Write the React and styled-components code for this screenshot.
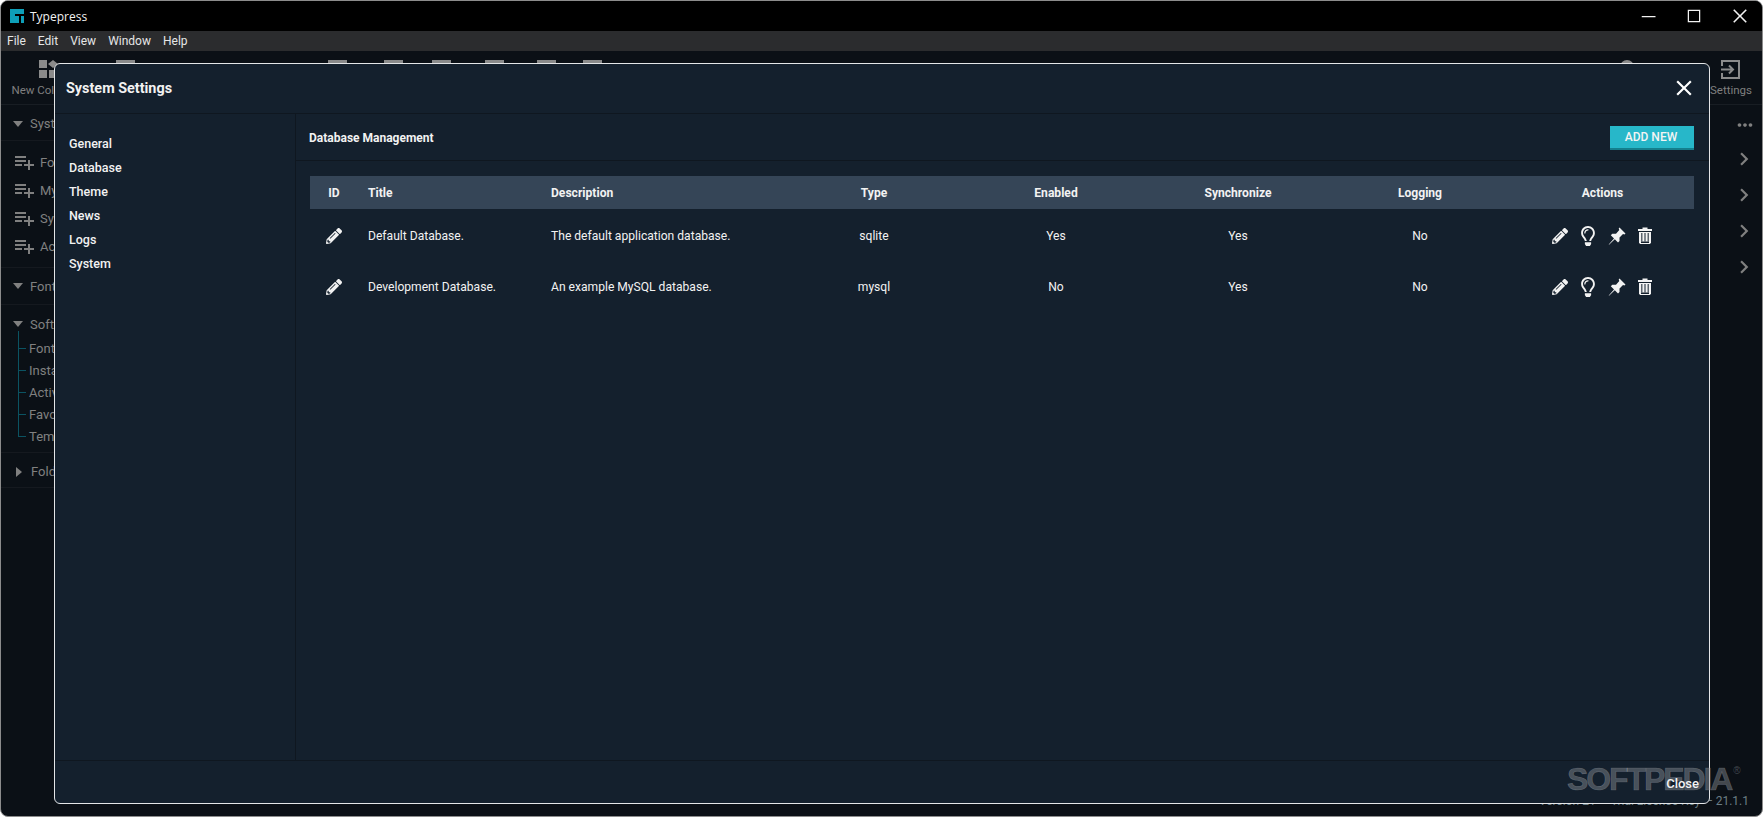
import React from "react";
import styled, { createGlobalStyle } from "styled-components";
import { FaPencilAlt, FaRegLightbulb } from "react-icons/fa";
import { MdPlaylistAdd, MdChevronRight, MdMoreHoriz, MdClose } from "react-icons/md";
import { VscChromeMinimize, VscChromeMaximize, VscChromeClose } from "react-icons/vsc";

const GlobalStyle = createGlobalStyle`
	html, body, #root {
		margin: 0;
		padding: 0;
		height: 100%;
		background: #fff;
		overflow: hidden;
	}
	* {
		box-sizing: border-box;
	}
	body {
		font-family: Roboto, "Liberation Sans", sans-serif;
	}
`;

const sidebarRows = ["Fonts", "My Fonts", "System", "Active"];
const treeRows = ["Fonts", "Installed", "Active", "Favorites", "Temporary"];
const navItems = ["General", "Database", "Theme", "News", "Logs", "System"];
const chevrons = [0, 1, 2, 3];
const toolSquares = [28, 193, 37, 29, 34, 33, 27];

const databases = [
	{ title: "Default Database.", description: "The default application database.", type: "sqlite", enabled: "Yes", sync: "Yes", logging: "No" },
	{ title: "Development Database.", description: "An example MySQL database.", type: "mysql", enabled: "No", sync: "Yes", logging: "No" },
];

const Logo = () => (
	<svg width="14" height="14" viewBox="0 0 14 14">
		<rect width="14" height="14" fill="#0e9fb8" />
		<path d="M5 5h9v2h-3v7H9V7H5z" fill="#000" />
	</svg>
);

const TrashIcon = () => (
	<svg width="14" height="17" viewBox="0 0 14 17">
		<path d="M4.500 2V.5h5V2H14v2H0V2z" fill="#f2f2f2" />
		<path d="M1 5h12v10.500l-1 1.500H2l-1-1.500z" fill="#f2f2f2" />
		<path d="M3 6h1.500v8.500H3zM6.250 6h1.500v8.500h-1.500zM9.500 6H11v8.500H9.500z" fill="#5b646d" />
		<path d="M3 14.500h8V16H3z" fill="#14202d" />
	</svg>
);

const PinIcon = () => (
	<svg width="18" height="18" viewBox="0 0 18 18" fill="#f2f2f2">
		<path d="M11.500.5l6 6-1 1L15 7l-3.500 3.500V14L10 15.500l-3.200-3.200L1 17.800l-.3-.3L6 11.500 2.800 8.200l1.500-1.500H8L11.300 3l-.6-1.500z" />
	</svg>
);

const App = () => {
	return (
		<Window>
			<GlobalStyle />
			<TitleBar>
				<Logo />
				<AppName>Typepress</AppName>
				<WindowButtons>
					<VscChromeMinimize />
					<VscChromeMaximize />
					<VscChromeClose />
				</WindowButtons>
			</TitleBar>
			<MenuBar>
				<span>File</span>
				<span>Edit</span>
				<span>View</span>
				<span>Window</span>
				<span>Help</span>
			</MenuBar>
			<Toolbar>
				<NewCollection>
					<svg width="20" height="20" viewBox="0 0 20 20" fill="#8b8b8b">
						<path d="M0 0h8v8H0zM0 10h8v8H0zM10 10h8v8h-8zM14 0l5 4-5 4-5-4z" />
					</svg>
					New Collection
				</NewCollection>
				{toolSquares.map((gap, i) => (
					<ToolSquare key={i} $gap={gap} />
				))}
				<ToolSpacer />
				<ToolCircle />
				<SettingsTool>
					<svg width="20" height="20" viewBox="0 0 20 20" fill="none" stroke="#8b8b8b" strokeWidth="2">
						<path d="M1 6V1h17v17H1v-5M0 9.500h12M8 5.500l4 4-4 4" />
					</svg>
					Settings
				</SettingsTool>
			</Toolbar>
			<Workspace>
				<Sidebar>
					<SideHeader $height={36} $top={2}>
						<ArrowDown />
						System
					</SideHeader>
					<SideList>
						{sidebarRows.map((row) => (
							<SideRow key={row}>
								<MdPlaylistAdd />
								{row}
							</SideRow>
						))}
					</SideList>
					<SideHeader $height={37}>
						<ArrowDown />
						Fonts
					</SideHeader>
					<SideHeader $height={38} $plain>
						<ArrowDown />
						Softpedia
					</SideHeader>
					<Tree>
						{treeRows.map((row) => (
							<TreeRow key={row}>{row}</TreeRow>
						))}
					</Tree>
					<SideHeader $height={35} $top={3}>
						<ArrowRight />
						Folders
					</SideHeader>
				</Sidebar>
				<RightPanel>
					<DotsRow>
						<MdMoreHoriz />
					</DotsRow>
					{chevrons.map((c) => (
						<ChevronRow key={c}>
							<MdChevronRight />
						</ChevronRow>
					))}
				</RightPanel>
			</Workspace>
			<Version>Version 21 — Trial License Key — 21.1.1</Version>

			<Modal>
				<ModalHeader>
					<ModalTitle>System Settings</ModalTitle>
					<CloseIcon />
				</ModalHeader>
				<ModalBody>
					<Nav>
						{navItems.map((item) => (
							<NavItem key={item}>{item}</NavItem>
						))}
					</Nav>
					<Content>
						<ContentHeader>
							<ContentTitle>Database Management</ContentTitle>
							<AddButton>ADD NEW</AddButton>
						</ContentHeader>
						<Table>
							<HeadRow>
								<Cell $center>ID</Cell>
								<Cell $pad>Title</Cell>
								<Cell $pad>Description</Cell>
								<Cell $center>Type</Cell>
								<Cell $center>Enabled</Cell>
								<Cell $center>Synchronize</Cell>
								<Cell $center>Logging</Cell>
								<Cell $center>Actions</Cell>
							</HeadRow>
							{databases.map((db) => (
								<BodyRow key={db.title}>
									<Cell $center>
										<FaPencilAlt />
									</Cell>
									<Cell $pad>{db.title}</Cell>
									<Cell $pad>{db.description}</Cell>
									<Cell $center>{db.type}</Cell>
									<Cell $center>{db.enabled}</Cell>
									<Cell $center>{db.sync}</Cell>
									<Cell $center>{db.logging}</Cell>
									<Actions>
										<ActionSlot>
											<FaPencilAlt />
										</ActionSlot>
										<ActionSlot $size={20}>
											<FaRegLightbulb />
										</ActionSlot>
										<ActionSlot>
											<PinIcon />
										</ActionSlot>
										<ActionSlot>
											<TrashIcon />
										</ActionSlot>
									</Actions>
								</BodyRow>
							))}
						</Table>
					</Content>
				</ModalBody>
				<ModalFooter>
					<CloseText>Close</CloseText>
				</ModalFooter>
			</Modal>
			<Watermark>SOFTPEDIA<sup>®</sup></Watermark>
		</Window>
	);
};

export default App;

const Window = styled.div`
	position: relative;
	width: 1763px;
	height: 817px;
	display: flex;
	flex-direction: column;
	background: #0b1016;
	border: 1px solid #8c8c8c;
	border-radius: 8px;
	overflow: hidden;
`;

const TitleBar = styled.div`
	height: 30px;
	flex: none;
	display: flex;
	align-items: center;
	padding-left: 9px;
	background: #000;
	color: #f2f2f2;
`;

const AppName = styled.div`
	margin-left: 6px;
	font-size: 12px;
	font-family: "Open Sans", sans-serif;
`;

const WindowButtons = styled.div`
	margin-left: auto;
	display: flex;
	align-items: center;
	gap: 26px;
	padding-right: 12px;
	font-size: 20px;
`;

const MenuBar = styled.div`
	height: 20px;
	flex: none;
	display: flex;
	align-items: center;
	gap: 12px;
	padding-left: 6px;
	background: #2b2c2e;
	color: #e6e6e6;
	font-size: 12px;
`;

const Toolbar = styled.div`
	height: 54px;
	flex: none;
	display: flex;
	align-items: flex-start;
	padding: 9px 0 0 11px;
	border-bottom: 1px solid #181d23;
	color: #7f7f7f;
	font-size: 11.5px;
`;

const NewCollection = styled.div`
	width: 76px;
	display: flex;
	flex-direction: column;
	align-items: center;
	gap: 3px;
	white-space: nowrap;

	svg {
		margin-right: 2px;
	}
`;

const ToolSquare = styled.div`
	flex: none;
	width: 19px;
	height: 20px;
	margin-left: ${(props) => props.$gap}px;
	background: #8b8b8b;
`;

const ToolSpacer = styled.div`
	flex: 1;
`;

const ToolCircle = styled.div`
	width: 14px;
	height: 14px;
	margin-right: 75px;
	border-radius: 50%;
	background: #8b8b8b;
`;

const SettingsTool = styled.div`
	width: 44px;
	margin-right: 9px;
	display: flex;
	flex-direction: column;
	align-items: center;
	gap: 3px;
`;

const Workspace = styled.div`
	flex: 1;
	display: flex;
	justify-content: space-between;
	color: #808080;
	font-size: 13px;
`;

const Sidebar = styled.div`
	width: 54px;
	white-space: nowrap;
	overflow: hidden;
`;

const SideHeader = styled.div`
	height: ${(props) => props.$height}px;
	display: flex;
	align-items: center;
	gap: 7px;
	padding: ${(props) => props.$top || 0}px 0 0 12px;
	border-bottom: ${(props) => (props.$plain ? "none" : "1px solid #15191f")};
`;

const ArrowDown = styled.span`
	flex: none;
	width: 0;
	height: 0;
	border-left: 5px solid transparent;
	border-right: 5px solid transparent;
	border-top: 6px solid #808080;
`;

const ArrowRight = styled.span`
	flex: none;
	width: 0;
	height: 0;
	margin: 0 2px 0 3px;
	border-top: 5px solid transparent;
	border-bottom: 5px solid transparent;
	border-left: 6px solid #808080;
`;

const SideList = styled.div`
	display: flex;
	flex-direction: column;
	padding: 7px 0;
	border-bottom: 1px solid #15191f;
`;

const SideRow = styled.div`
	height: 28px;
	display: flex;
	align-items: center;
	gap: 4px;
	padding-left: 11px;

	svg {
		font-size: 24px;
		flex: none;
	}
`;

const Tree = styled.div`
	margin-top: -6px;
	padding: 0 0 5px 17px;
	border-bottom: 1px solid #15191f;
`;

const TreeRow = styled.div`
	position: relative;
	height: 22px;
	display: flex;
	align-items: center;
	padding-left: 11px;

	&::before {
		content: "";
		position: absolute;
		left: 0;
		top: 11px;
		width: 8px;
		height: 1px;
		background: #0b5362;
	}

	&::after {
		content: "";
		position: absolute;
		left: 0;
		top: 0;
		bottom: 0;
		width: 1px;
		background: #0b5362;
	}

	&:first-child::after {
		top: -6px;
	}

	&:last-child::after {
		bottom: 10px;
	}
`;

const RightPanel = styled.div`
	width: 54px;
	display: flex;
	flex-direction: column;
	align-items: flex-end;
`;

const DotsRow = styled.div`
	height: 36px;
	padding: 3px 6px 0 0;
	display: flex;
	align-items: center;
	font-size: 22px;
`;

const ChevronRow = styled.div`
	height: 36px;
	padding-right: 5px;
	display: flex;
	align-items: center;
	font-size: 26px;
`;

const Version = styled.div`
	position: absolute;
	right: 13px;
	bottom: 8px;
	color: #6b7f86;
	font-size: 12px;
	white-space: nowrap;
`;

const Modal = styled.div`
	position: absolute;
	left: 53px;
	top: 62px;
	width: 1656px;
	height: 741px;
	display: flex;
	flex-direction: column;
	background: #14202d;
	border: 1px solid #e4e6e8;
	border-radius: 6px;
	color: #f2f2f2;
`;

const ModalHeader = styled.div`
	height: 50px;
	flex: none;
	display: flex;
	align-items: center;
	justify-content: space-between;
	padding: 0 12px 1px 11px;
	border-bottom: 1px solid #0f1720;
`;

const ModalTitle = styled.div`
	font-size: 14.4px;
	font-weight: 700;
`;

const CloseIcon = styled(MdClose)`
	font-size: 26px;
	color: #fff;
`;

const ModalBody = styled.div`
	flex: 1;
	display: flex;
	min-height: 0;
`;

const Nav = styled.div`
	width: 241px;
	flex: none;
	display: flex;
	flex-direction: column;
	padding: 18px 0 0 14px;
	border-right: 1px solid #0f1720;
`;

const NavItem = styled.div`
	height: 24px;
	line-height: 24px;
	font-size: 12.5px;
	font-weight: 500;
`;

const Content = styled.div`
	flex: 1;
	min-width: 0;
`;

const ContentHeader = styled.div`
	height: 47px;
	display: flex;
	align-items: center;
	justify-content: space-between;
	padding: 0 15px 0 13px;
	border-bottom: 1px solid #0f1720;
`;

const ContentTitle = styled.div`
	padding-top: 2px;
	font-size: 12px;
	font-weight: 700;
`;

const AddButton = styled.button`
	width: 84px;
	height: 24px;
	margin-top: 1px;
	padding: 0 2px 0 0;
	background: #27b7c9;
	border: none;
	border-bottom: 2px solid #147f8d;
	color: #f4f4f4;
	font-family: inherit;
	font-size: 12px;
	font-weight: 500;
`;

const Table = styled.div`
	margin: 15px 15px 0 14px;
	font-size: 12px;
`;

const HeadRow = styled.div`
	height: 33px;
	display: grid;
	grid-template-columns: 48px 183px 242px repeat(4, 182px) 181px;
	align-items: center;
	background: #354557;
	font-weight: 700;
`;

const BodyRow = styled.div`
	height: 51px;
	padding-top: 2px;
	display: grid;
	grid-template-columns: 48px 183px 242px repeat(4, 182px) 181px;
	align-items: center;
`;

const Cell = styled.div`
	display: flex;
	align-items: center;
	justify-content: ${(props) => (props.$center ? "center" : "flex-start")};
	padding-left: ${(props) => (props.$pad ? "10px" : "0")};
	font-size: 12.1px;

	&:last-child {
		padding-left: 2px;
	}

	svg {
		font-size: 16px;
	}
`;

const Actions = styled.div`
	display: flex;
	align-items: center;
	justify-content: center;
	padding-left: 2px;
`;

const ActionSlot = styled.div`
	width: 28.500px;
	display: flex;
	align-items: center;
	justify-content: center;
	font-size: ${(props) => props.$size || 16}px;
`;

const ModalFooter = styled.div`
	height: 43px;
	flex: none;
	display: flex;
	align-items: center;
	justify-content: flex-end;
	padding: 2px 10px 0 0;
	border-top: 1px solid #0f1720;
	font-size: 13px;
	font-weight: 500;
`;

const CloseText = styled.span`
	position: relative;
	z-index: 2;
`;

const Watermark = styled.div`
	position: absolute;
	left: 1566px;
	top: 760px;
	color: rgba(150, 155, 160, 0.42);
	-webkit-text-stroke: 0.6px rgba(150, 155, 160, 0.42);
	font-family: "Liberation Sans", sans-serif;
	font-size: 32px;
	font-weight: 700;
	letter-spacing: -2.1px;
	white-space: nowrap;
	pointer-events: none;

	sup {
		margin-left: 2px;
		font-size: 10px;
		font-weight: 400;
		vertical-align: 16px;
		line-height: 0;
		-webkit-text-stroke: 0;
	}
`;
